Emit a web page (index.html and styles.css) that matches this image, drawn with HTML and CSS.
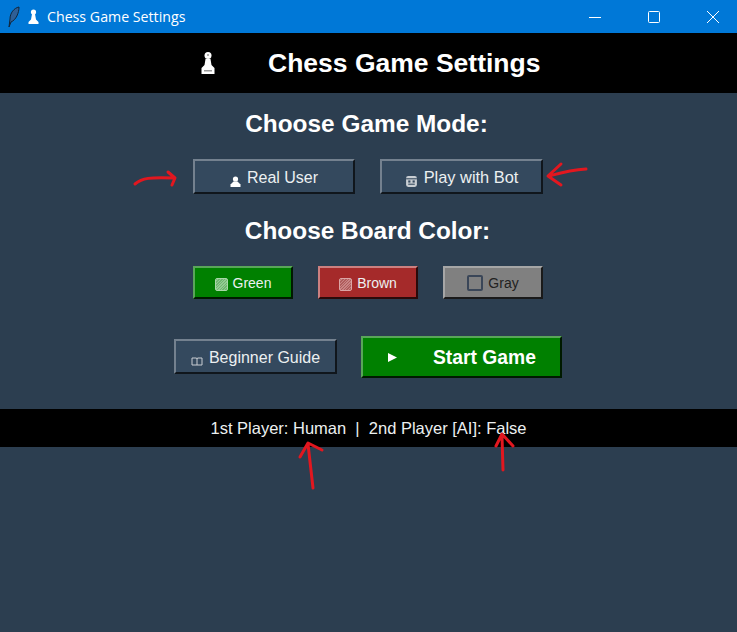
FILE: index.html
```html
<!DOCTYPE html>
<html lang="en">
<head>
    <meta charset="UTF-8">
    <title>Chess Game Settings</title>
    <link rel="stylesheet" href="styles.css">
</head>
<body>
    <div class="titlebar">
        <svg class="feather" width="14" height="22" viewBox="0 0 14 22">
            <path d="M12 1C7 2 3 7 3 13L2 21L4 16C9 14 12 7 12 1Z" fill="#2f5f95" stroke="#10263c" stroke-width="1"/>
        </svg>
        <svg class="title-pawn" width="11" height="15" viewBox="0 0 11 15">
            <circle cx="5.5" cy="3" r="2.6" fill="#fff"/>
            <path d="M4 5H7L8 10.5L10.5 13V15H.5V13L3 10.5Z" fill="#fff"/>
        </svg>
        <span class="title-text">Chess Game Settings</span>
        <div class="window-controls">
            <svg width="14" height="14" viewBox="0 0 14 14"><path d="M1 7.5H13" stroke="#fff" stroke-width="1"/></svg>
            <svg width="14" height="14" viewBox="0 0 14 14"><rect x="1.5" y="1.5" width="11" height="11" rx="1" fill="none" stroke="#fff"/></svg>
            <svg width="14" height="14" viewBox="0 0 14 14"><path d="M1 1L13 13M13 1L1 13" stroke="#fff"/></svg>
        </div>
    </div>

    <div class="app-header">
        <svg class="header-pawn" width="14" height="22" viewBox="0 0 14 22">
            <circle cx="7" cy="3.5" r="3.5" fill="#fff"/>
            <circle cx="7" cy="3" r="1" fill="#999"/>
            <path d="M4.5 7H9.5L10.5 13L13.5 16V22H.5V16L3.5 13Z" fill="#fff"/>
            <rect x="3" y="18" width="8" height="1.5" fill="#999"/>
        </svg>
        <h1>Chess Game Settings</h1>
    </div>

    <div class="content">
        <h2 class="first">Choose Game Mode:</h2>
        <div class="row mode-row">
            <button class="btn btn-slate btn-user">
                <svg class="ico" width="11" height="11" viewBox="0 0 11 11"><circle cx="5.5" cy="3" r="2.6" fill="#fff"/><path d="M3.5 5.5H7.5L10.5 8.5V11H.5V8.5Z" fill="#fff"/></svg>
                Real User
            </button>
            <button class="btn btn-slate btn-bot">
                <svg class="ico" width="13" height="13" viewBox="0 0 12 12"><rect x="1" y="1" width="10" height="10" rx="2" fill="#c9ced3"/><rect x="1" y="3" width="10" height="1" fill="#34495e"/><rect x="3" y="5" width="2" height="2" fill="#34495e"/><rect x="7" y="5" width="2" height="2" fill="#34495e"/><rect x="3" y="8" width="6" height="1" fill="#34495e"/></svg>
                Play with Bot
            </button>
        </div>

        <h2 class="second">Choose Board Color:</h2>
        <div class="row color-row">
            <button class="btn btn-color btn-green"><span class="swatch swatch-green"></span>Green</button>
            <button class="btn btn-color btn-brown"><span class="swatch swatch-brown"></span>Brown</button>
            <button class="btn btn-color btn-gray"><span class="swatch swatch-gray"></span>Gray</button>
        </div>

        <div class="row action-row">
            <button class="btn btn-slate btn-guide">
                <svg class="ico" width="12" height="9" viewBox="0 0 12 9"><path d="M1 1H5.5L6 2L6.5 1H11V8H1Z" fill="#34495e" stroke="#c9ced3"/><path d="M6 2V8" stroke="#c9ced3"/></svg>
                Beginner Guide
            </button>
            <button class="btn btn-start">
                <svg class="play" width="9" height="9" viewBox="0 0 9 9"><path d="M0 0L9 4.5L0 9Z" fill="#fff"/></svg>
                <span>Start Game</span>
            </button>
        </div>

        <div class="status">1st Player: Human &nbsp;|&nbsp; 2nd Player [AI]: False</div>
    </div>

    <svg class="annotations" width="737" height="632" viewBox="0 0 737 632">
        <g fill="none" stroke="#e2171f" stroke-width="3" stroke-linecap="round" stroke-linejoin="round">
            <path d="M135 184C142 178 150 177 174 178M168 172L175 178L172 185"/>
            <path d="M586 169C570 170 560 173 549 176M561 164L548 176L561 185"/>
            <path d="M313 488L308 444M300 457L308 443L322 450"/>
            <path d="M503 470L502 436M496 446L502 434L513 446"/>
        </g>
    </svg>
</body>
</html>
```

FILE: styles.css
```css
* {
    margin: 0;
    padding: 0;
    box-sizing: border-box;
}

body {
    background-color: #2c3e50;
    font-family: "Liberation Sans", Arial, sans-serif;
    width: 737px;
    height: 632px;
    overflow: hidden;
    position: relative;
}

.titlebar {
    display: flex;
    align-items: center;
    height: 33px;
    background-color: #0078d7;
    color: #fff;
    padding-left: 7px;
}

.feather {
    margin-right: 7px;
}

.title-pawn {
    margin-right: 8px;
}

.title-text {
    font-family: "Open Sans", sans-serif;
    font-size: 14.2px;
}

.window-controls {
    display: flex;
    gap: 45px;
    margin-left: auto;
    margin-right: 17px;
}

.app-header {
    display: flex;
    align-items: center;
    height: 60px;
    background-color: #000;
    color: #fff;
    padding-left: 201px;
}

.app-header h1 {
    font-size: 26.5px;
    margin-left: 53px;
}

.content {
    display: flex;
    flex-direction: column;
    align-items: center;
}

h2 {
    color: #fff;
    font-size: 24.4px;
    line-height: 32px;
}

h2.first {
    margin-top: 15px;
    padding-right: 4px;
}

h2.second {
    margin-top: 21px;
    padding-right: 2px;
}

.row {
    display: flex;
    justify-content: center;
    align-items: center;
    padding-right: 1px;
}

.mode-row {
    gap: 25px;
    margin-top: 19px;
}

.color-row {
    gap: 25px;
    margin-top: 19px;
}

.action-row {
    gap: 24px;
    margin-top: 37px;
}

.btn {
    display: flex;
    align-items: center;
    justify-content: center;
    border: 2px solid;
    border-color: #74818f #10161c #10161c #74818f;
    color: #ecf0f1;
    font-family: inherit;
}

.btn-slate {
    background-color: #34495e;
    font-size: 16px;
    height: 35px;
    width: 163px;
    padding-top: 2px;
}

.btn-user {
    width: 162px;
}

.btn-bot {
    font-size: 16.4px;
}

.btn-guide {
    margin-bottom: 1px;
}

.ico {
    margin-top: 7px;
    margin-right: 6px;
}

.btn-color {
    font-size: 14px;
    height: 33px;
    width: 100px;
}

.btn-green {
    background-color: #008000;
    border-color: #59a659 #001a00 #001a00 #59a659;
}

.btn-brown {
    background-color: #a52a2a;
    border-color: #cc8080 #2a0a0a #2a0a0a #cc8080;
}

.btn-gray {
    background-color: #808080;
    border-color: #a6a6a6 #1a1a1a #1a1a1a #a6a6a6;
    color: #222;
}

.swatch {
    width: 13px;
    height: 13px;
    margin-top: 4px;
    margin-right: 5px;
    border-radius: 2px;
}

.swatch-green {
    background: repeating-linear-gradient(135deg, #6fb56f 0 1px, #93cb93 1px 2px);
    border: 1px solid #a8d8a8;
}

.swatch-brown {
    background: repeating-linear-gradient(135deg, #b05c5c 0 1px, #c98484 1px 2px);
    border: 1px solid #dba5a5;
}

.swatch-gray {
    width: 16px;
    height: 16px;
    margin-top: 0;
    border: 2px solid #3a4658;
}

.btn-start {
    background-color: #008000;
    border-color: #59a659 #001a00 #001a00 #59a659;
    color: #fff;
    font-size: 19.3px;
    font-weight: bold;
    width: 201px;
    height: 42px;
    padding-left: 25px;
    padding-top: 1px;
    justify-content: flex-start;
}

.play {
    margin-right: 36px;
}

.status {
    align-self: stretch;
    display: flex;
    align-items: center;
    justify-content: center;
    height: 38px;
    margin-top: 31px;
    padding-top: 1px;
    background-color: #000;
    color: #ecf0f1;
    font-size: 16.5px;
    white-space: pre;
}

.annotations {
    position: absolute;
    top: 0;
    left: 0;
    pointer-events: none;
}
```
